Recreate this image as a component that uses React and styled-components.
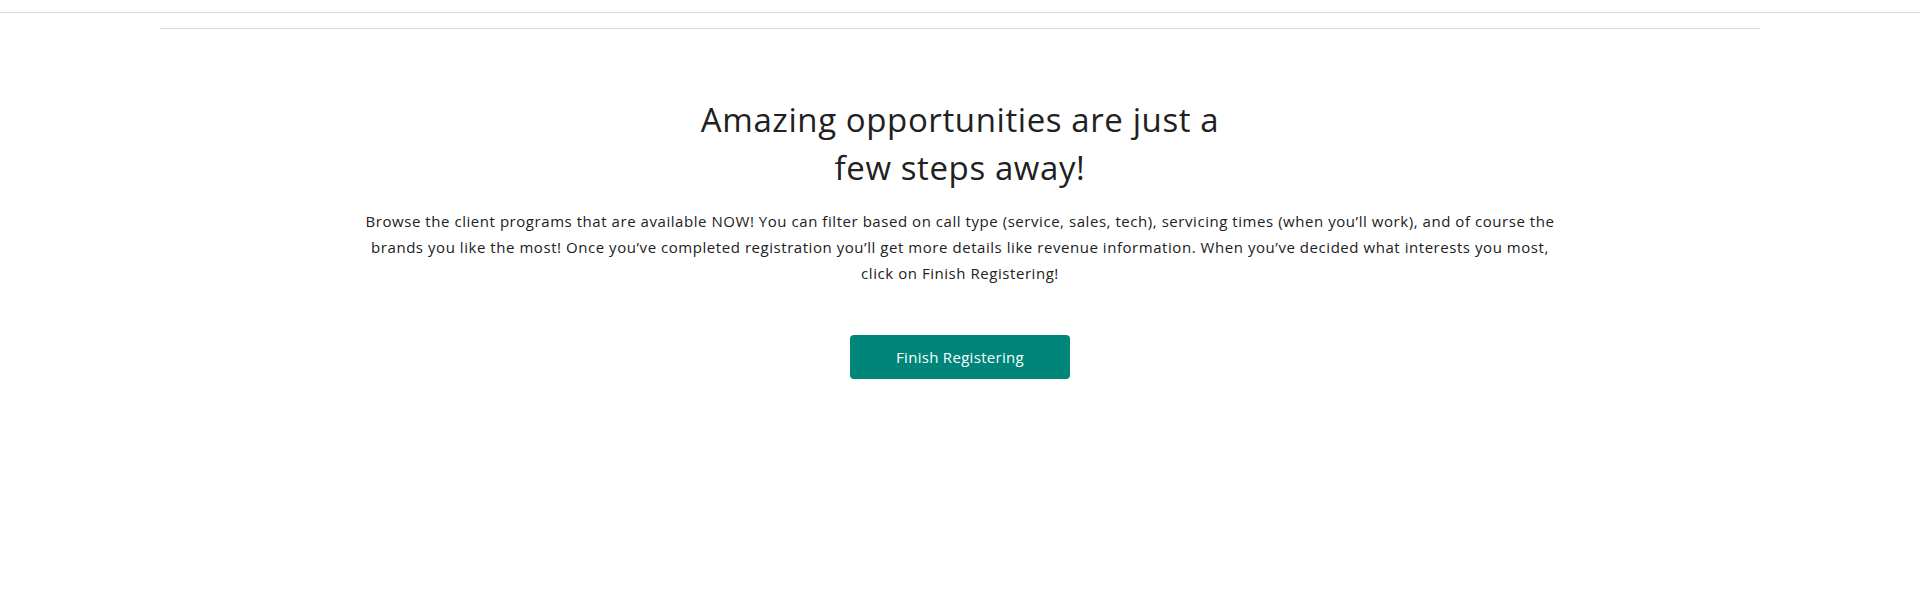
import React from "react";
import styled, { createGlobalStyle } from "styled-components";

const Global = createGlobalStyle`
  html, body { margin: 0; padding: 0; background: #fff; }
  body { font-family: "Open Sans", "Liberation Sans", sans-serif; color: #212121; }
`;

const TopBar = styled.header`
  height: 12px;
  border-bottom: 1px solid #dcdcdc;
`;

const Container = styled.main`
  width: 1600px;
  margin: 15px auto 0;
  border-top: 1px solid #dcdcdc;
  display: flex;
  flex-direction: column;
  align-items: center;
  padding-top: 67px;
`;

const Heading = styled.h1`
  margin: 0;
  max-width: 545px;
  text-align: center;
  font-size: 33px;
  letter-spacing: 0.6px;
  line-height: 48px;
  font-weight: 400;
  color: #212121;
`;

const Lead = styled.p`
  margin: 16px 0 0;
  max-width: 1200px;
  text-align: center;
  font-size: 15px;
  letter-spacing: 0.55px;
  line-height: 26px;
  color: #212121;
`;

const Button = styled.button`
  margin-top: 49px;
  width: 220px;
  height: 44px;
  border: none;
  border-radius: 4px;
  background: #00857a;
  color: #fff;
  font-family: inherit;
  font-size: 15px;
  letter-spacing: 0.3px;
  cursor: pointer;
`;

export default function App() {
  return (
    <>
      <Global />
      <TopBar />
      <Container>
        <Heading>Amazing opportunities are just a few steps away!</Heading>
        <Lead>
          Browse the client programs that are available NOW! You can filter based on call type (service, sales, tech), servicing times (when you’ll work), and of course the brands you like the most! Once you’ve completed registration you’ll get more details like revenue information. When you’ve decided what interests you most, click on Finish Registering!
        </Lead>
        <Button>Finish Registering</Button>
      </Container>
    </>
  );
}
